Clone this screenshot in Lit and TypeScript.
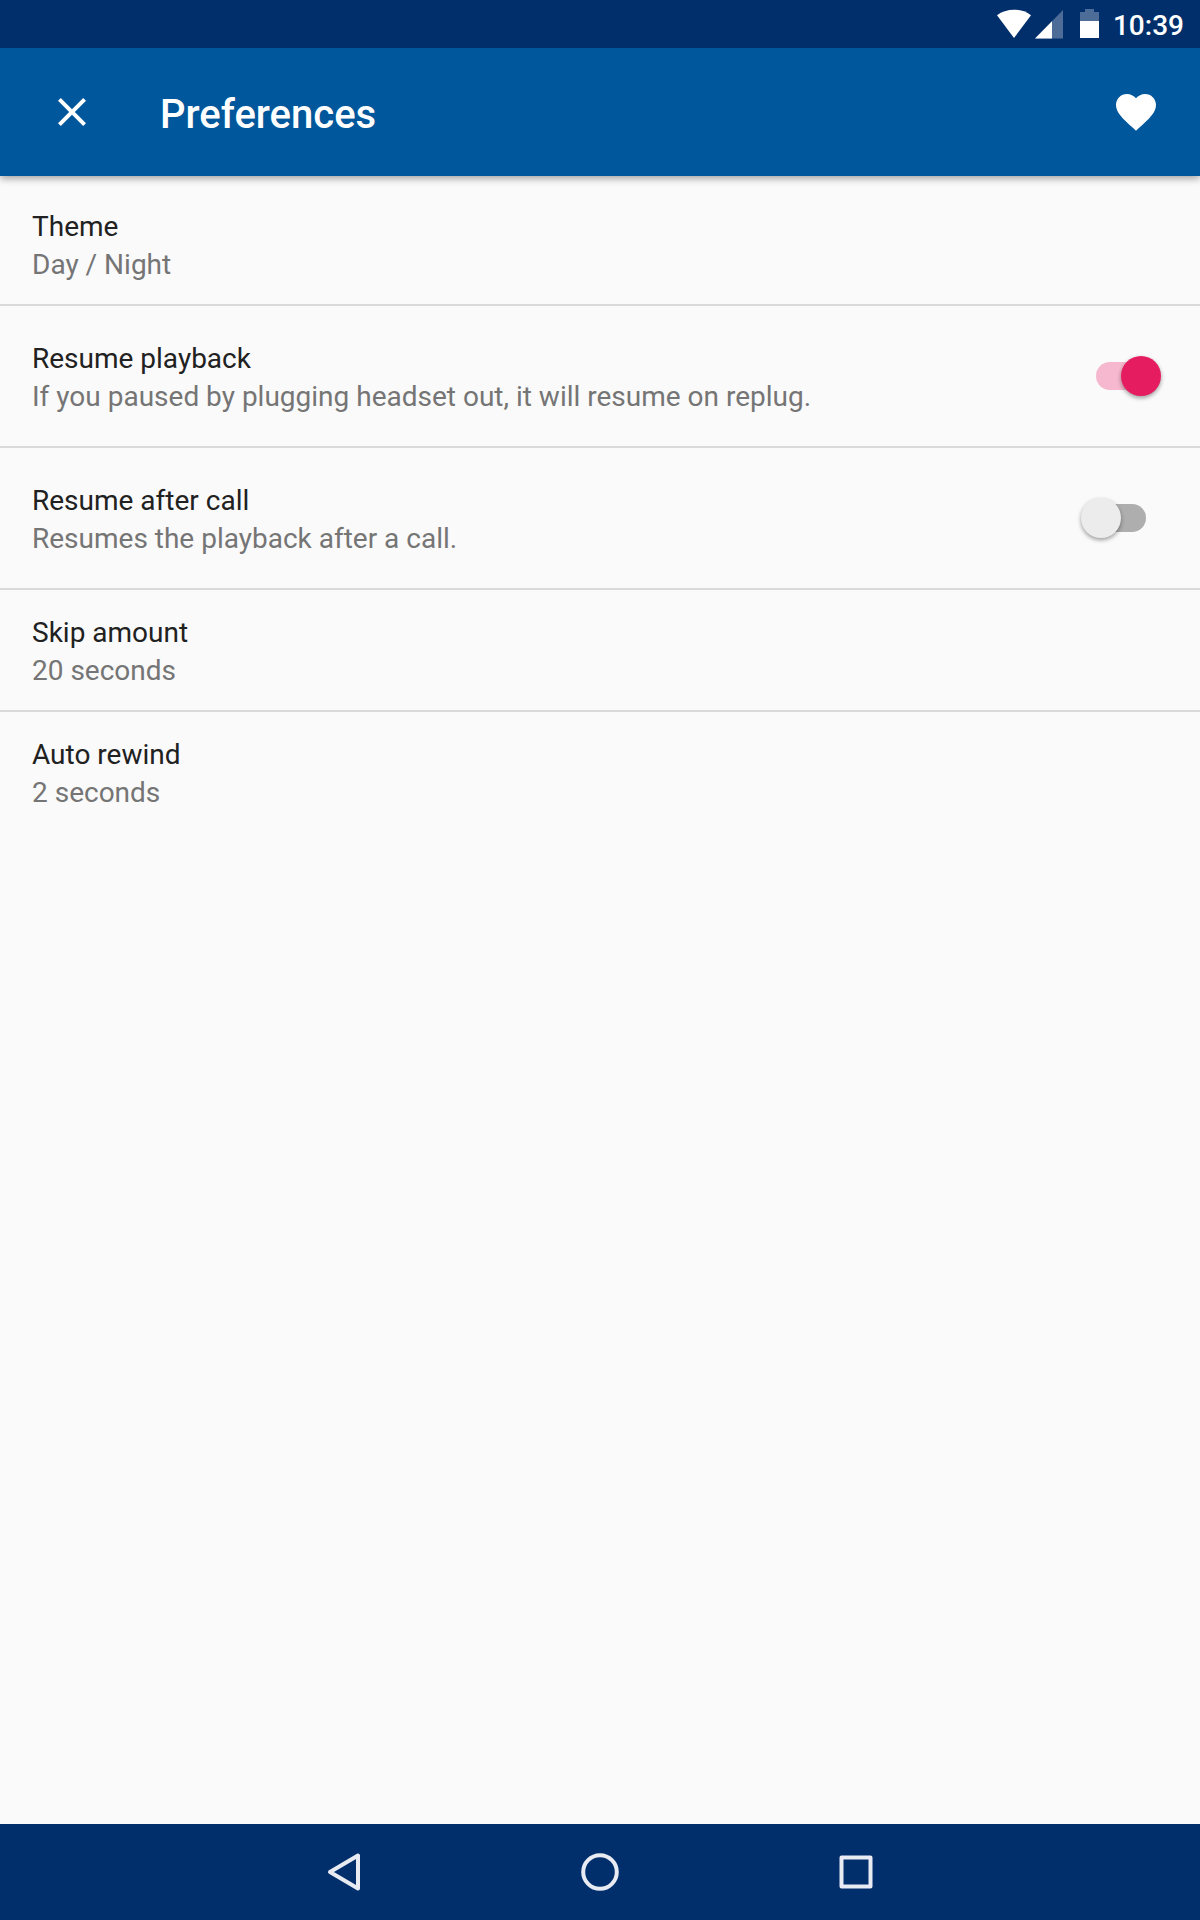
import { LitElement, html, css, svg } from "lit";
import { customElement, state } from "lit/decorators.js";

interface Preference {
  id: string;
  title: string;
  summary: string;
  toggle: boolean;
}

const PREFERENCES: Preference[] = [
  { id: "theme", title: "Theme", summary: "Day / Night", toggle: false },
  {
    id: "resume-playback",
    title: "Resume playback",
    summary: "If you paused by plugging headset out, it will resume on replug.",
    toggle: true,
  },
  {
    id: "resume-after-call",
    title: "Resume after call",
    summary: "Resumes the playback after a call.",
    toggle: true,
  },
  { id: "skip-amount", title: "Skip amount", summary: "20 seconds", toggle: false },
  { id: "auto-rewind", title: "Auto rewind", summary: "2 seconds", toggle: false },
];

@customElement("status-bar")
class StatusBar extends LitElement {
  static styles = css`
    :host {
      display: flex;
      align-items: center;
      justify-content: flex-end;
      height: 48px;
      padding: 0 16px;
      background: #002f6c;
      color: #fff;
    }
    svg {
      display: block;
      flex: none;
    }
    .signal {
      margin-left: 4px;
    }
    .battery {
      margin-left: 16px;
    }
    .clock {
      margin-left: 14px;
      padding-top: 4px;
      font-size: 28px;
      line-height: 32px;
      font-weight: 500;
    }
  `;

  render() {
    return html`
      <svg class="wifi" width="34" height="30" viewBox="0 0 34 30" aria-hidden="true">
        <path d="M0 6.3C4.700 2.500 10.600 0.700 17 0.700S29.300 2.500 34 6.300L17 29Z" fill="#fff" />
      </svg>
      <svg class="signal" width="28" height="30" viewBox="0 0 28 30" aria-hidden="true">
        <path d="M28 1V29.500H0Z" fill="#fff" fill-opacity="0.3" />
        <path d="M17 12.200V29.500H0Z" fill="#fff" />
      </svg>
      <svg class="battery" width="20" height="30" viewBox="0 0 20 30" aria-hidden="true">
        <path d="M6 0H15V3H20V12H1V3H6Z" fill="#fff" fill-opacity="0.3" />
        <path d="M1 12H20V29H1Z" fill="#fff" />
      </svg>
      <time class="clock">10:39</time>
    `;
  }
}

@customElement("app-toolbar")
class AppToolbar extends LitElement {
  static styles = css`
    :host {
      display: flex;
      align-items: center;
      height: 128px;
      padding: 0 16px;
      background: #01579b;
      color: #fff;
      position: relative;
      z-index: 1;
      box-shadow: 0 2px 8px rgba(0, 0, 0, 0.4);
      clip-path: inset(0 0 -16px 0);
    }
    .action {
      display: grid;
      place-items: center;
      width: 96px;
      height: 96px;
      margin: 0;
      padding: 0;
      border: 0;
      background: none;
      color: inherit;
      cursor: pointer;
    }
    .close {
      width: 112px;
    }
    .title {
      flex: 1;
      margin: 0;
      padding: 6px 0 0 32px;
      font-size: 40px;
      line-height: 48px;
      font-weight: 500;
    }
  `;

  render() {
    return html`
      <button class="action close" aria-label="Close">
        <svg width="48" height="48" viewBox="0 0 24 24" fill="currentColor">
          <path d="M19 6.410L17.590 5 12 10.590 6.410 5 5 6.410 10.590 12 5 17.590 6.410 19 12 13.410 17.590 19 19 17.590 13.410 12z" />
        </svg>
      </button>
      <h1 class="title">Preferences</h1>
      <button class="action" aria-label="Support the app">
        <svg width="48" height="48" viewBox="0 0 24 24" fill="currentColor">
          <path d="M12 21.350l-1.450-1.320C5.400 15.360 2 12.280 2 8.500 2 5.420 4.420 3 7.500 3c1.740 0 3.410.810 4.500 2.090C13.090 3.810 14.760 3 16.500 3 19.580 3 22 5.420 22 8.500c0 3.780-3.400 6.860-8.550 11.540L12 21.350z" />
        </svg>
      </button>
    `;
  }
}

@customElement("nav-bar")
class NavBar extends LitElement {
  static styles = css`
    :host {
      display: block;
      background: #002f6c;
    }
    .keys {
      display: grid;
      grid-template-columns: repeat(3, 1fr);
      width: 64%;
      margin: 0 auto;
    }
    .key {
      display: grid;
      place-items: center;
      height: 96px;
      margin: 0;
      padding: 0;
      border: 0;
      background: none;
      color: #e9ebf3;
      cursor: pointer;
    }
  `;

  private key(label: string, shape: unknown) {
    return html`
      <button class="key" aria-label=${label}>
        <svg
          width="40"
          height="40"
          viewBox="0 0 40 40"
          fill="none"
          stroke="currentColor"
          stroke-width="4"
          stroke-linejoin="round"
        >
          ${shape}
        </svg>
      </button>
    `;
  }

  render() {
    return html`
      <nav class="keys">
        ${this.key("Back", svg`<path d="M34 3.500V36.500L6 20Z" />`)}
        ${this.key("Home", svg`<circle cx="20" cy="20" r="16.800" />`)}
        ${this.key("Overview", svg`<rect x="5.500" y="5.500" width="29" height="29" />`)}
      </nav>
    `;
  }
}

@customElement("app-root")
class AppRoot extends LitElement {
  static styles = css`
    :host {
      display: flex;
      flex-direction: column;
      min-height: 100vh;
      background: #fafafa;
      font-family: Roboto, "Liberation Sans", sans-serif;
    }
    .list {
      flex: 1;
      padding-top: 8px;
    }
    .row {
      display: flex;
      align-items: center;
      box-sizing: border-box;
      width: 100%;
      margin: 0;
      padding: 20px 39px 20px 32px;
      border: 0;
      background: none;
      font: inherit;
      font-size: 28px;
      line-height: 38px;
      text-align: left;
      cursor: pointer;
    }
    .row + .row {
      border-top: 2px solid #dadada;
    }
    .with-toggle {
      padding-top: 30px;
      padding-bottom: 30px;
    }
    .text {
      display: flex;
      flex-direction: column;
      flex: 1;
      padding-top: 4px;
    }
    .title {
      color: #212121;
    }
    .summary {
      color: #757575;
    }
    .toggle {
      appearance: none;
      display: grid;
      align-items: center;
      flex: none;
      width: 80px;
      height: 40px;
      margin: 0;
      cursor: pointer;
    }
    .toggle::before,
    .toggle::after {
      content: "";
      grid-area: 1 / 1;
    }
    .toggle::before {
      justify-self: center;
      width: 50px;
      height: 28px;
      border-radius: 14px;
      background: #aeaeae;
    }
    .toggle::after {
      justify-self: start;
      width: 40px;
      height: 40px;
      border-radius: 50%;
      background: #ececec;
      box-shadow: 0 2px 4px rgba(0, 0, 0, 0.38);
    }
    .toggle:checked::before {
      background: #f6b8ce;
    }
    .toggle:checked::after {
      justify-self: end;
      background: #e61c61;
    }
  `;

  @state() private enabled: Record<string, boolean> = { "resume-playback": true };

  private setEnabled(id: string, event: Event) {
    this.enabled = { ...this.enabled, [id]: (event.target as HTMLInputElement).checked };
  }

  private row(pref: Preference) {
    const text = html`
      <span class="text">
        <span class="title">${pref.title}</span>
        <span class="summary">${pref.summary}</span>
      </span>
    `;
    if (!pref.toggle) {
      return html`<button class="row">${text}</button>`;
    }
    return html`
      <label class="row with-toggle" for=${pref.id}>
        ${text}
        <input
          class="toggle"
          type="checkbox"
          role="switch"
          id=${pref.id}
          .checked=${Boolean(this.enabled[pref.id])}
          @change=${(event: Event) => this.setEnabled(pref.id, event)}
        />
      </label>
    `;
  }

  render() {
    return html`
      <status-bar></status-bar>
      <app-toolbar></app-toolbar>
      <main class="list">${PREFERENCES.map((pref) => this.row(pref))}</main>
      <nav-bar></nav-bar>
    `;
  }
}
